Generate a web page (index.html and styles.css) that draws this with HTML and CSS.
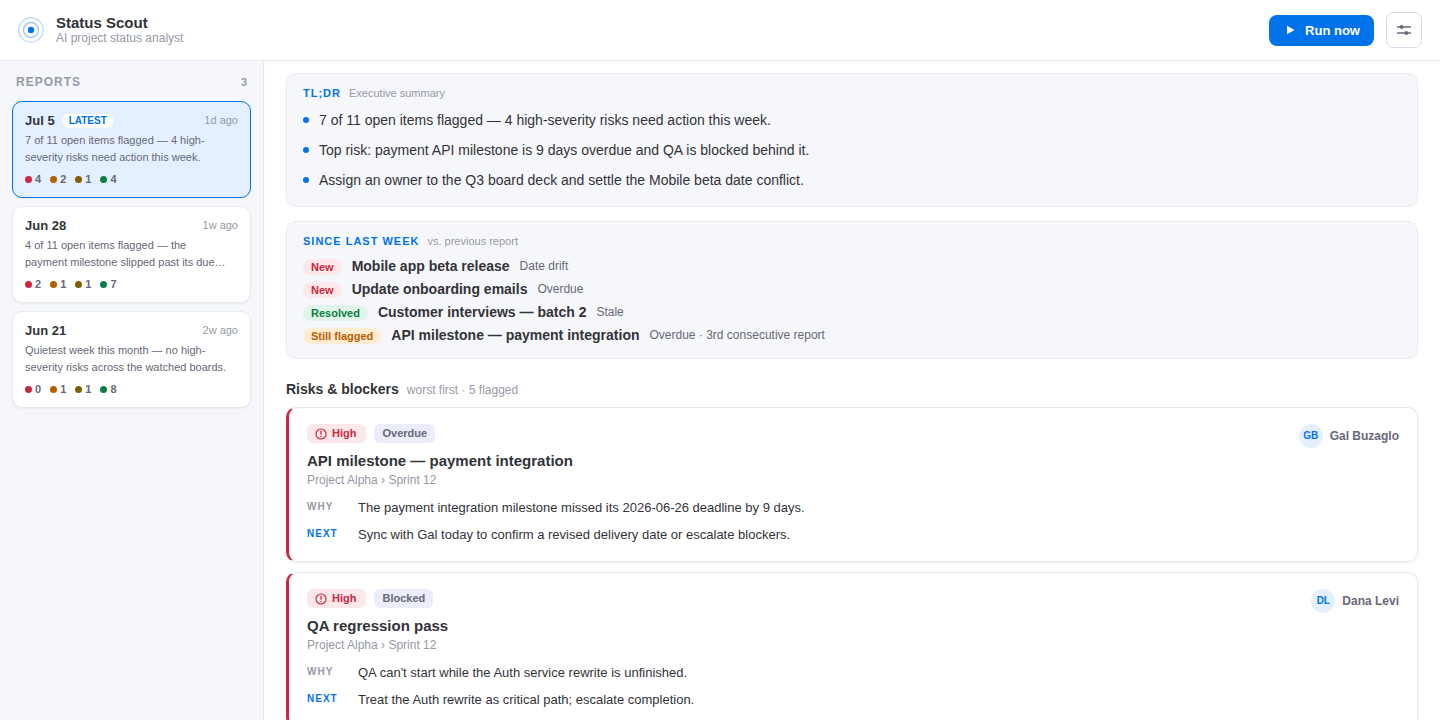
FILE: index.html
```html
<!DOCTYPE html>
<html lang="en">
<head>
    <meta charset="UTF-8">
    <meta name="viewport" content="width=device-width, initial-scale=1.0">
    <title>Status Scout</title>
    <link rel="stylesheet" href="styles.css">
</head>
<body>
    <header class="topbar">
        <svg class="logo" viewBox="0 0 26 26" aria-hidden="true">
            <circle cx="13" cy="13" r="12.2" fill="none" stroke="#0073ea" stroke-width="1.4" stroke-opacity=".25"/>
            <circle cx="13" cy="13" r="7.5" fill="none" stroke="#0073ea" stroke-width="1.4" stroke-opacity=".4"/>
            <circle cx="13" cy="13" r="3.2" fill="#0073ea"/>
        </svg>
        <div class="brand">
            <h1>Status Scout</h1>
            <p>AI project status analyst</p>
        </div>
        <button type="button" class="run-btn">
            <svg width="12" height="12" viewBox="0 0 12 12" aria-hidden="true"><path d="M2 1.8v8.4L9.5 6z" fill="#fff"/></svg>
            Run now
        </button>
        <button type="button" class="settings-btn" aria-label="Settings">
            <svg width="16" height="16" viewBox="0 0 16 16" aria-hidden="true">
                <path d="M1.6 5h12.8M1.6 11h12.8" stroke="#676879" stroke-width="1.5" stroke-linecap="round"/>
                <circle cx="5.7" cy="5" r="1.9" fill="#676879"/>
                <circle cx="10.3" cy="11" r="1.9" fill="#676879"/>
            </svg>
        </button>
    </header>

    <div class="layout">
        <aside class="sidebar">
            <div class="sidebar-head">
                <h2>Reports</h2>
                <span class="count">3</span>
            </div>

            <button type="button" class="report active">
                <span class="report-top">
                    <span class="report-date">Jul 5</span>
                    <span class="latest">LATEST</span>
                    <span class="ago">1d ago</span>
                </span>
                <span class="snippet">7 of 11 open items flagged — 4 high-severity risks need action this week.</span>
                <span class="counts">
                    <span class="dot red">4</span>
                    <span class="dot orange">2</span>
                    <span class="dot olive">1</span>
                    <span class="dot green">4</span>
                </span>
            </button>

            <button type="button" class="report">
                <span class="report-top">
                    <span class="report-date">Jun 28</span>
                    <span class="ago">1w ago</span>
                </span>
                <span class="snippet">4 of 11 open items flagged — the payment milestone slipped past its due…</span>
                <span class="counts">
                    <span class="dot red">2</span>
                    <span class="dot orange">1</span>
                    <span class="dot olive">1</span>
                    <span class="dot green">7</span>
                </span>
            </button>

            <button type="button" class="report">
                <span class="report-top">
                    <span class="report-date">Jun 21</span>
                    <span class="ago">2w ago</span>
                </span>
                <span class="snippet">Quietest week this month — no high-severity risks across the watched boards.</span>
                <span class="counts">
                    <span class="dot red">0</span>
                    <span class="dot orange">1</span>
                    <span class="dot olive">1</span>
                    <span class="dot green">8</span>
                </span>
            </button>
        </aside>

        <main class="content">
            <section class="panel">
                <div class="panel-head">
                    <h2>TL;DR</h2>
                    <span>Executive summary</span>
                </div>
                <ul class="summary">
                    <li>7 of 11 open items flagged — 4 high-severity risks need action this week.</li>
                    <li>Top risk: payment API milestone is 9 days overdue and QA is blocked behind it.</li>
                    <li>Assign an owner to the Q3 board deck and settle the Mobile beta date conflict.</li>
                </ul>
            </section>

            <section class="panel">
                <div class="panel-head">
                    <h2>SINCE LAST WEEK</h2>
                    <span>vs. previous report</span>
                </div>
                <ul class="changes">
                    <li><span class="pill new">New</span><strong>Mobile app beta release</strong><span class="note">Date drift</span></li>
                    <li><span class="pill new">New</span><strong>Update onboarding emails</strong><span class="note">Overdue</span></li>
                    <li><span class="pill resolved">Resolved</span><strong>Customer interviews — batch 2</strong><span class="note">Stale</span></li>
                    <li><span class="pill still">Still flagged</span><strong>API milestone — payment integration</strong><span class="note">Overdue · 3rd consecutive report</span></li>
                </ul>
            </section>

            <div class="section-head">
                <h2>Risks &amp; blockers</h2>
                <span>worst first · 5 flagged</span>
            </div>

            <article class="risk">
                <div class="risk-top">
                    <div class="tags">
                        <span class="tag high">
                            <svg width="12" height="12" viewBox="0 0 12 12" aria-hidden="true"><circle cx="6" cy="6" r="5" fill="none" stroke="currentColor" stroke-width="1.2"/><path d="M6 2.8v3.9M6 7.9v1.3" stroke="currentColor" stroke-width="1.3"/></svg>
                            High
                        </span>
                        <span class="tag">Overdue</span>
                    </div>
                    <div class="owner"><span class="avatar">GB</span>Gal Buzaglo</div>
                </div>
                <h3>API milestone — payment integration</h3>
                <p class="path">Project Alpha › Sprint 12</p>
                <dl class="details">
                    <dt>WHY</dt>
                    <dd>The payment integration milestone missed its 2026-06-26 deadline by 9 days.</dd>
                    <dt class="next">NEXT</dt>
                    <dd>Sync with Gal today to confirm a revised delivery date or escalate blockers.</dd>
                </dl>
            </article>

            <article class="risk">
                <div class="risk-top">
                    <div class="tags">
                        <span class="tag high">
                            <svg width="12" height="12" viewBox="0 0 12 12" aria-hidden="true"><circle cx="6" cy="6" r="5" fill="none" stroke="currentColor" stroke-width="1.2"/><path d="M6 2.8v3.9M6 7.9v1.3" stroke="currentColor" stroke-width="1.3"/></svg>
                            High
                        </span>
                        <span class="tag">Blocked</span>
                    </div>
                    <div class="owner"><span class="avatar">DL</span>Dana Levi</div>
                </div>
                <h3>QA regression pass</h3>
                <p class="path">Project Alpha › Sprint 12</p>
                <dl class="details">
                    <dt>WHY</dt>
                    <dd>QA can't start while the Auth service rewrite is unfinished.</dd>
                    <dt class="next">NEXT</dt>
                    <dd>Treat the Auth rewrite as critical path; escalate completion.</dd>
                </dl>
            </article>
        </main>
    </div>
</body>
</html>
```
FILE: styles.css
```css
* {
    box-sizing: border-box;
    margin: 0;
    padding: 0;
}
body {
    display: flex;
    flex-direction: column;
    height: 100vh;
    overflow: hidden;
    font-family: "Liberation Sans", Arial, sans-serif;
    font-size: 14px;
    color: #323338;
    background: #fff;
}
button {
    font: inherit;
    color: inherit;
    cursor: pointer;
}
ul {
    list-style: none;
}

/* Header */
.topbar {
    display: flex;
    align-items: center;
    gap: 12px;
    flex: none;
    padding: 12px 18px;
    border-bottom: 1px solid #e6e9ef;
}
.logo {
    width: 26px;
    height: 26px;
}
.brand {
    flex: 1;
}
.brand h1 {
    font-size: 15px;
    line-height: 16px;
}
.brand p {
    font-size: 12px;
    line-height: 14px;
    color: #9699a6;
}
.run-btn {
    display: flex;
    align-items: center;
    gap: 8px;
    padding: 8px 14px 8px 16px;
    border: none;
    border-radius: 8px;
    background: #0073ea;
    color: #fff;
    font-size: 13px;
    line-height: 15px;
    font-weight: bold;
}
.settings-btn {
    display: flex;
    align-items: center;
    justify-content: center;
    width: 36px;
    height: 36px;
    border: 1px solid #d8daea;
    border-radius: 8px;
    background: #fff;
}

.layout {
    display: flex;
    flex: 1;
    min-height: 0;
}

/* Reports list */
.sidebar {
    display: flex;
    flex-direction: column;
    gap: 8px;
    flex: none;
    width: 264px;
    padding: 12px;
    border-right: 1px solid #e6e9ef;
    background: #f6f7fb;
}
.sidebar-head {
    display: flex;
    align-items: center;
    justify-content: space-between;
    padding: 1px 4px 3px;
    line-height: 16px;
    color: #9699a6;
}
.sidebar-head h2 {
    font-size: 12px;
    letter-spacing: 1px;
    text-transform: uppercase;
}
.count {
    font-size: 11px;
    font-weight: bold;
}
.report {
    display: flex;
    flex-direction: column;
    padding: 11px 12px;
    border: 1px solid #e6e9ef;
    border-radius: 10px;
    background: #fff;
    box-shadow: 0 1px 2px rgba(50, 51, 56, 0.06);
    text-align: left;
}
.report.active {
    border-color: #0073ea;
    background: #e5f0ff;
}
.report-top {
    display: flex;
    align-items: center;
    gap: 8px;
    line-height: 15px;
}
.report-date {
    font-size: 13px;
    font-weight: bold;
}
.latest {
    padding: 0 6px;
    border-radius: 5px;
    background: #fff;
    color: #0073ea;
    font-size: 10px;
    line-height: 14px;
    font-weight: bold;
}
.ago {
    margin-left: auto;
    font-size: 11px;
    color: #9699a6;
}
.snippet {
    margin: 4px 8px 0 0;
    font-size: 11px;
    line-height: 17px;
    color: #676879;
}
.counts {
    display: flex;
    gap: 9px;
    margin-top: 7px;
    font-size: 11px;
    line-height: 13px;
    font-weight: bold;
    color: #676879;
}
.dot {
    display: flex;
    align-items: center;
    gap: 3px;
}
.dot::before {
    content: "";
    width: 7px;
    height: 7px;
    border-radius: 50%;
}
.red::before {
    background: #c9283f;
}
.orange::before {
    background: #b35f00;
}
.olive::before {
    background: #7d6000;
}
.green::before {
    background: #0b7d45;
}

/* Report body */
.content {
    flex: 1;
    min-width: 0;
    padding: 12px 22px;
    overflow: hidden;
}
.panel {
    margin-bottom: 14px;
    padding: 12px 16px;
    border: 1px solid #e6e9ef;
    border-radius: 10px;
    background: #f6f7fb;
}
.panel-head {
    display: flex;
    align-items: baseline;
    gap: 8px;
    line-height: 15px;
    font-size: 11px;
    color: #9699a6;
}
.panel-head h2 {
    font-size: 11px;
    letter-spacing: 1px;
    color: #0073ea;
}
.summary {
    display: flex;
    flex-direction: column;
    gap: 8px;
    padding: 8px 0 3px;
}
.summary li {
    display: flex;
    align-items: center;
    gap: 10px;
    line-height: 22px;
}
.summary li::before {
    content: "";
    width: 6px;
    height: 6px;
    border-radius: 50%;
    background: #0073ea;
}
.changes {
    display: flex;
    flex-direction: column;
    gap: 6px;
    padding: 9px 0 2px;
}
.changes li {
    display: flex;
    align-items: center;
    gap: 10px;
    line-height: 17px;
    font-size: 14px;
}
.changes .note {
    font-size: 12px;
    color: #676879;
}
.pill {
    padding: 0 8px;
    border-radius: 8px;
    font-size: 11px;
    line-height: 16px;
    font-weight: bold;
}
.new {
    background: #fce8eb;
    color: #c9283f;
}
.resolved {
    background: #e0f4e8;
    color: #0b7d45;
}
.still {
    background: #ffecd1;
    color: #b35f00;
}

.section-head {
    display: flex;
    align-items: baseline;
    gap: 8px;
    padding: 7px 0 8px;
    line-height: 18px;
    font-size: 12px;
    color: #9699a6;
}
.section-head h2 {
    font-size: 14px;
    color: #323338;
}
.risk {
    margin-bottom: 10px;
    padding: 16px 18px;
    border: 1px solid #e6e9ef;
    border-left: 3px solid #c9283f;
    border-radius: 10px;
    box-shadow: 0 1px 3px rgba(50, 51, 56, 0.08);
}
.risk-top {
    display: flex;
    justify-content: space-between;
}
.tags {
    display: flex;
    align-items: flex-start;
    gap: 8px;
}
.tag {
    display: flex;
    align-items: center;
    gap: 5px;
    padding: 0 8px;
    border-radius: 6px;
    background: #ecedfb;
    color: #676879;
    font-size: 11px;
    line-height: 19px;
    font-weight: bold;
}
.tag.high {
    padding-right: 10px;
    background: #fce8eb;
    color: #c9283f;
}
.owner {
    display: flex;
    align-items: center;
    gap: 7px;
    font-size: 12px;
    font-weight: bold;
    color: #676879;
}
.avatar {
    width: 24px;
    border-radius: 50%;
    background: #e5f0ff;
    color: #0073ea;
    font-size: 10px;
    line-height: 24px;
    text-align: center;
}
.risk h3 {
    margin: 3px 0 1px;
    font-size: 15px;
    line-height: 19px;
}
.path {
    font-size: 12px;
    line-height: 18px;
    color: #9699a6;
}
.details {
    display: grid;
    grid-template-columns: 43px 1fr;
    gap: 7px 8px;
    margin-top: 9px;
    font-size: 13px;
    line-height: 20px;
}
.details dt {
    font-size: 10px;
    line-height: 17px;
    font-weight: bold;
    letter-spacing: 1px;
    color: #9699a6;
}
.details dt.next {
    color: #0073ea;
}
```
